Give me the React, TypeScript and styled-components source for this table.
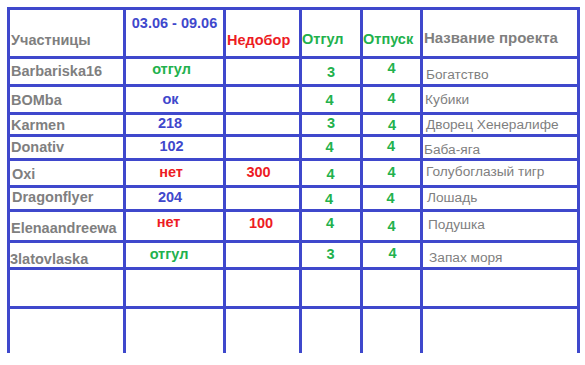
import React from "react";
import styled, { createGlobalStyle } from "styled-components";

type Tone = "gray" | "blue" | "red" | "green";

interface CellSpec {
  t?: string;
  tone?: Tone;
  pt?: number; // отступ сверху до текста
  pl?: number; // для текста по левому краю
  dx?: number; // сдвиг для текста по центру
  center?: boolean;
  regular?: boolean;
  size?: number;
}

const tones: Record<Tone, string> = {
  gray: "#7f7f7f",
  blue: "#3f48cc",
  red: "#ed1c24",
  green: "#22b14c",
};

const GlobalStyle = createGlobalStyle`
  html, body {
    margin: 0;
    padding: 0;
    background: #ffffff;
  }
`;

const Page = styled.div`
  padding: 7px;
  font-family: "Liberation Sans", Arial, sans-serif;
`;

const Table = styled.div`
  display: inline-grid;
  grid-template-columns: 113px 97px 73px 58px 57px 154px;
  grid-template-rows: 46px 25px 25px 19px 21px 24px 21px 28px 24px 36px 44px;
  gap: 3px;
  padding: 3px 3px 0 3px;
  background: #3f48cc;
`;

const Cell = styled.div<{ $center: boolean; $pt: number; $pl: number; $dx: number }>`
  display: flex;
  align-items: flex-start;
  justify-content: ${(p) => (p.$center ? "center" : "flex-start")};
  background: #ffffff;
  box-sizing: border-box;
  padding-top: ${(p) => p.$pt}px;
  padding-left: ${(p) => (p.$center ? Math.max(0, p.$dx * 2) : p.$pl)}px;
  padding-right: ${(p) => (p.$center ? Math.max(0, -p.$dx * 2) : 0)}px;
  white-space: nowrap;
  overflow: visible;
`;

const Text = styled.span<{ $tone: Tone; $regular: boolean; $size: number }>`
  display: block;
  line-height: 1;
  font-size: ${(p) => p.$size}px;
  font-weight: ${(p) => (p.$regular ? 400 : 700)};
  color: ${(p) => tones[p.$tone]};
`;

const E: CellSpec = {};

const rows: CellSpec[][] = [
  [
    { t: "Участницы", tone: "gray", pt: 23, pl: 1 },
    { t: "03.06 - 09.06", tone: "blue", pt: 6, center: true },
    { t: "Недобор", tone: "red", pt: 23, pl: 1 },
    { t: "Отгул", tone: "green", pt: 21.5, pl: 0 },
    { t: "Отпуск", tone: "green", pt: 21.5, pl: 0 },
    { t: "Название проекта", tone: "gray", pt: 20, pl: 1, size: 15 },
  ],
  [
    { t: "Barbariska16", tone: "gray", pt: 5, pl: 1 },
    { t: "отгул", tone: "green", pt: 3, center: true, dx: -3 },
    E,
    { t: "3", tone: "green", pt: 6, center: true },
    { t: "4", tone: "green", pt: 2, center: true },
    { t: "Богатство", tone: "gray", pt: 9, pl: 3, regular: true },
  ],
  [
    { t: "BOMba", tone: "gray", pt: 6, pl: 1 },
    { t: "ок", tone: "blue", pt: 5, center: true, dx: -4 },
    E,
    { t: "4", tone: "green", pt: 6, center: true, dx: -1.5 },
    { t: "4", tone: "green", pt: 4, center: true },
    { t: "Кубики", tone: "gray", pt: 6, pl: 2, regular: true },
  ],
  [
    { t: "Karmen", tone: "gray", pt: 3, pl: 1 },
    { t: "218", tone: "blue", pt: 1, center: true, dx: -4.5 },
    E,
    { t: "3", tone: "green", pt: 1, center: true },
    { t: "4", tone: "green", pt: 3, center: true, dx: 0.5 },
    { t: "Дворец Хенералифе", tone: "gray", pt: 3, pl: 3, regular: true },
  ],
  [
    { t: "Donativ", tone: "gray", pt: 3, pl: 1 },
    { t: "102", tone: "blue", pt: 2, center: true, dx: -3 },
    E,
    { t: "4", tone: "green", pt: 3, center: true, dx: -1.5 },
    { t: "4", tone: "green", pt: 2, center: true, dx: -0.5 },
    { t: "Баба-яга", tone: "gray", pt: 6, pl: 1, regular: true },
  ],
  [
    { t: "Oxi", tone: "gray", pt: 6, pl: 2 },
    { t: "нет", tone: "red", pt: 4, center: true, dx: -3.5 },
    { t: "300", tone: "red", pt: 4, center: true, dx: -4 },
    { t: "4", tone: "green", pt: 6, center: true, dx: -0.5 },
    { t: "4", tone: "green", pt: 4, center: true },
    { t: "Голубоглазый тигр", tone: "gray", pt: 4, pl: 3, regular: true },
  ],
  [
    { t: "Dragonflyer", tone: "gray", pt: 2, pl: 2 },
    { t: "204", tone: "blue", pt: 2, center: true, dx: -4.5 },
    E,
    { t: "4", tone: "green", pt: 4, center: true, dx: -2 },
    { t: "4", tone: "green", pt: 3, center: true, dx: -1 },
    { t: "Лошадь", tone: "gray", pt: 3, pl: 4, regular: true },
  ],
  [
    { t: "Elenaandreewa", tone: "gray", pt: 9, pl: 1 },
    { t: "нет", tone: "red", pt: 3, center: true, dx: -6 },
    { t: "100", tone: "red", pt: 4, center: true, dx: -1.5 },
    { t: "4", tone: "green", pt: 4, center: true, dx: -1 },
    { t: "4", tone: "green", pt: 7, center: true },
    { t: "Подушка", tone: "gray", pt: 6, pl: 5, regular: true },
  ],
  [
    { t: "3latovlaska", tone: "gray", pt: 9, pl: 0 },
    { t: "отгул", tone: "green", pt: 3.5, center: true, dx: -5.5 },
    E,
    { t: "3", tone: "green", pt: 4, center: true, dx: -0.5 },
    { t: "4", tone: "green", pt: 3, center: true, dx: 1 },
    { t: "Запах моря", tone: "gray", pt: 8, pl: 6, regular: true },
  ],
  [E, E, E, E, E, E],
  [E, E, E, E, E, E],
];

const App: React.FC = () => {
  return (
    <Page>
      <GlobalStyle />
      <Table>
        {rows.map((row, r) =>
          row.map((c, i) => (
            <Cell
              key={`${r}-${i}`}
              $center={!!c.center}
              $pt={c.pt ?? 0}
              $pl={c.pl ?? 0}
              $dx={c.dx ?? 0}
            >
              {c.t && (
                <Text
                  $tone={c.tone ?? "gray"}
                  $regular={!!c.regular}
                  $size={c.size ?? (c.regular ? 13.7 : 14.5)}
                >
                  {c.t}
                </Text>
              )}
            </Cell>
          ))
        )}
      </Table>
    </Page>
  );
};

export default App;
